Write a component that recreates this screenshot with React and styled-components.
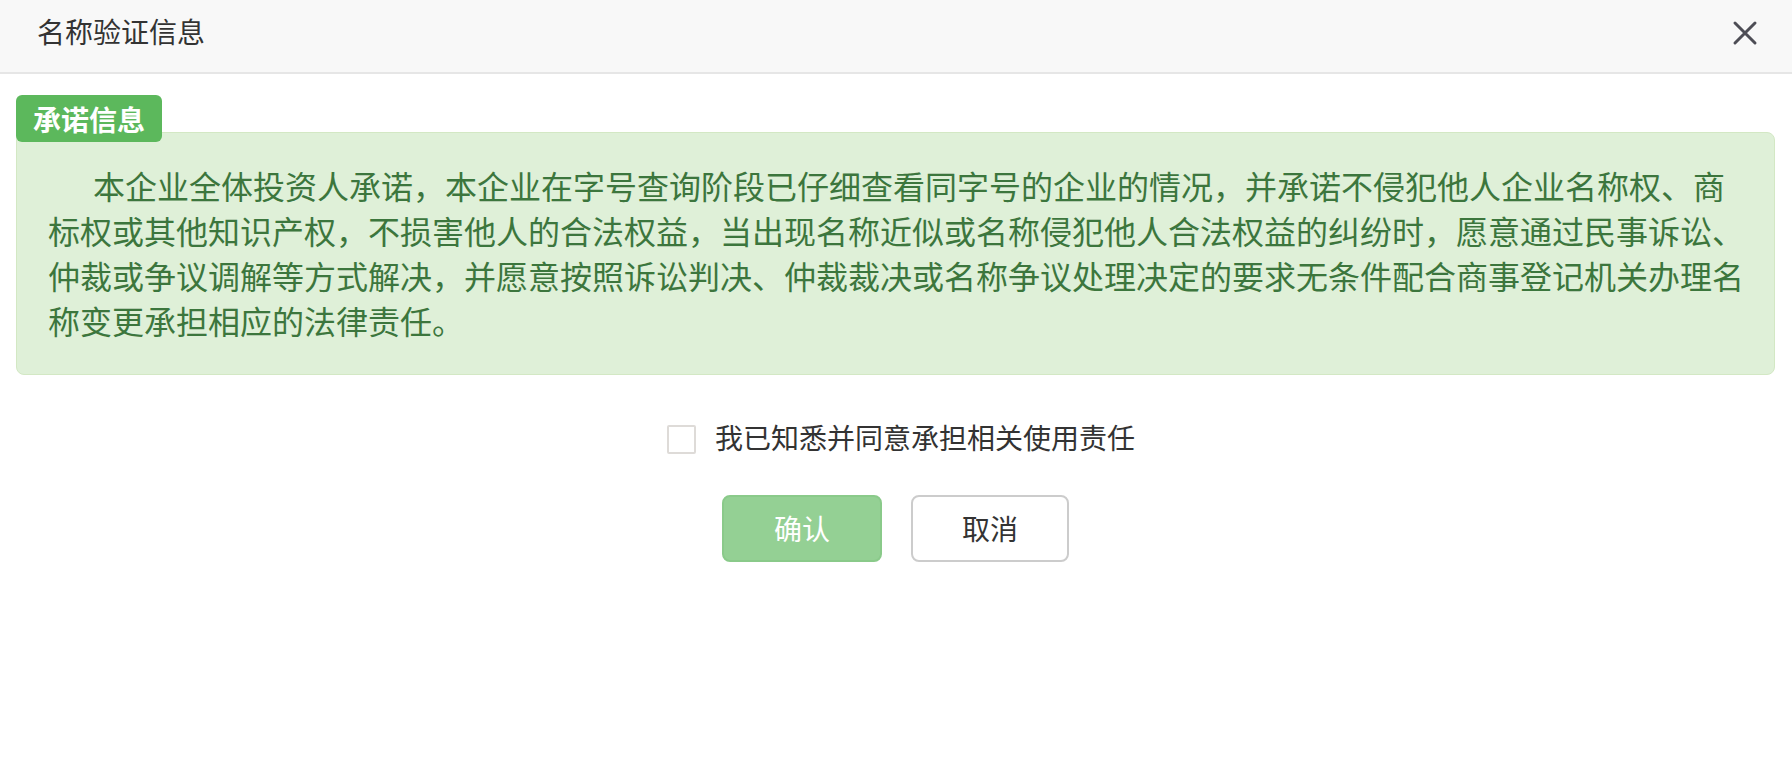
import React, { useState } from 'react';
import styled, { createGlobalStyle } from 'styled-components';

const GlobalStyle = createGlobalStyle`
  html, body {
    margin: 0;
    padding: 0;
    background: #ffffff;
  }

  body {
    font-family: "Noto Sans CJK SC", "Noto Sans", "Liberation Sans", sans-serif;
    color: #333333;
  }
`;

const Dialog = styled('div')`
  width: 1792px;
  min-height: 772px;
  background: #ffffff;
`;

const Header = styled('div')`
  height: 72px;
  padding: 0 34px 0 37px;
  background-color: #f8f8f8;
  border-bottom: 2px solid #e6e6e6;
  box-sizing: content-box;
  display: flex;
  justify-content: space-between;
  align-items: flex-start;
`;

const Title = styled('h3')`
  margin: 0;
  padding-top: 10px;
  font-size: 28px;
  line-height: 42px;
  font-weight: 400;
  color: #333333;
`;

const CloseButton = styled('button')`
  margin-top: 20px;
  width: 26px;
  height: 26px;
  padding: 0;
  border: 0;
  background: transparent;
  cursor: pointer;
  display: flex;
  align-items: center;
  justify-content: center;
`;

const Content = styled('div')`
  padding: 0 17px 0 16px;
`;

const Notice = styled('div')`
  position: relative;
  margin-top: 58px;
  padding: 30px 22px 31px 31px;
  background-color: #dff0d8;
  border: 1px solid #d3e8c4;
  border-radius: 8px;
  color: #3c763d;
`;

const Badge = styled('span')`
  position: absolute;
  top: -38px;
  left: -1px;
  height: 47px;
  padding: 0 17px;
  display: flex;
  align-items: center;
  background-color: #5cb85c;
  border-radius: 6px;
  color: #ffffff;
  font-size: 28px;
  font-weight: 700;
`;

const Promise = styled('p')`
  margin: 0;
  font-size: 32px;
  line-height: 45px;
  text-indent: 45px;
`;

const AgreeRow = styled('label')`
  margin-top: 42px;
  padding-left: 11px;
  height: 40px;
  display: flex;
  justify-content: center;
  align-items: center;
  gap: 19px;
  cursor: pointer;
  font-size: 28px;
  line-height: 40px;
  color: #333333;
`;

const CheckBox = styled('span')`
  width: 25px;
  height: 25px;
  margin-top: 5px;
  border: 2px solid ${({ checked }) => (checked ? '#5cb85c' : '#dedbd8')};
  border-radius: 2px;
  background: ${({ checked }) => (checked ? '#5cb85c' : '#ffffff')};
  display: flex;
  align-items: center;
  justify-content: center;
`;

const ButtonRow = styled('div')`
  margin-top: 38px;
  display: flex;
  justify-content: center;
  gap: 29px;
`;

const Button = styled('button')`
  width: ${({ width }) => width}px;
  height: 63px;
  box-sizing: content-box;
  padding: 0;
  border-radius: 8px;
  font-family: inherit;
  font-size: 28px;
  line-height: 63px;
  cursor: pointer;
  border: 2px solid ${({ primary }) => (primary ? '#4cae4c' : '#cccccc')};
  background-color: ${({ primary }) => (primary ? '#5cb85c' : '#ffffff')};
  color: ${({ primary }) => (primary ? '#ffffff' : '#333333')};

  &:disabled {
    opacity: .65;
    cursor: not-allowed;
  }
`;

const App = () => {
  const [agreed, setAgreed] = useState(false);

  return (
    <React.Fragment>
      <GlobalStyle />
      <Dialog>
        <Header>
          <Title>名称验证信息</Title>
          <CloseButton aria-label='关闭'>
            <svg width='26' height='26' viewBox='0 0 26 26'>
              <path d='M3 3 L23 23 M23 3 L3 23' stroke='#4d4d55' strokeWidth='3' strokeLinecap='round' />
            </svg>
          </CloseButton>
        </Header>
        <Content>
          <Notice>
            <Badge>承诺信息</Badge>
            <Promise>
              本企业全体投资人承诺，本企业在字号查询阶段已仔细查看同字号的企业的情况，并承诺不侵犯他人企业名称权、商标权或其他知识产权，不损害他人的合法权益，当出现名称近似或名称侵犯他人合法权益的纠纷时，愿意通过民事诉讼、仲裁或争议调解等方式解决，并愿意按照诉讼判决、仲裁裁决或名称争议处理决定的要求无条件配合商事登记机关办理名称变更承担相应的法律责任。
            </Promise>
          </Notice>
          <AgreeRow onClick={() => setAgreed(!agreed)}>
            <CheckBox checked={agreed}>
              {agreed && (
                <svg width='18' height='18' viewBox='0 0 18 18'>
                  <path d='M3 9 L7 13 L15 4' stroke='#fff' strokeWidth='2.5' fill='none' />
                </svg>
              )}
            </CheckBox>
            我已知悉并同意承担相关使用责任
          </AgreeRow>
          <ButtonRow>
            <Button primary width={156} disabled={!agreed}>确认</Button>
            <Button width={154}>取消</Button>
          </ButtonRow>
        </Content>
      </Dialog>
    </React.Fragment>
  );
};

export default App;
